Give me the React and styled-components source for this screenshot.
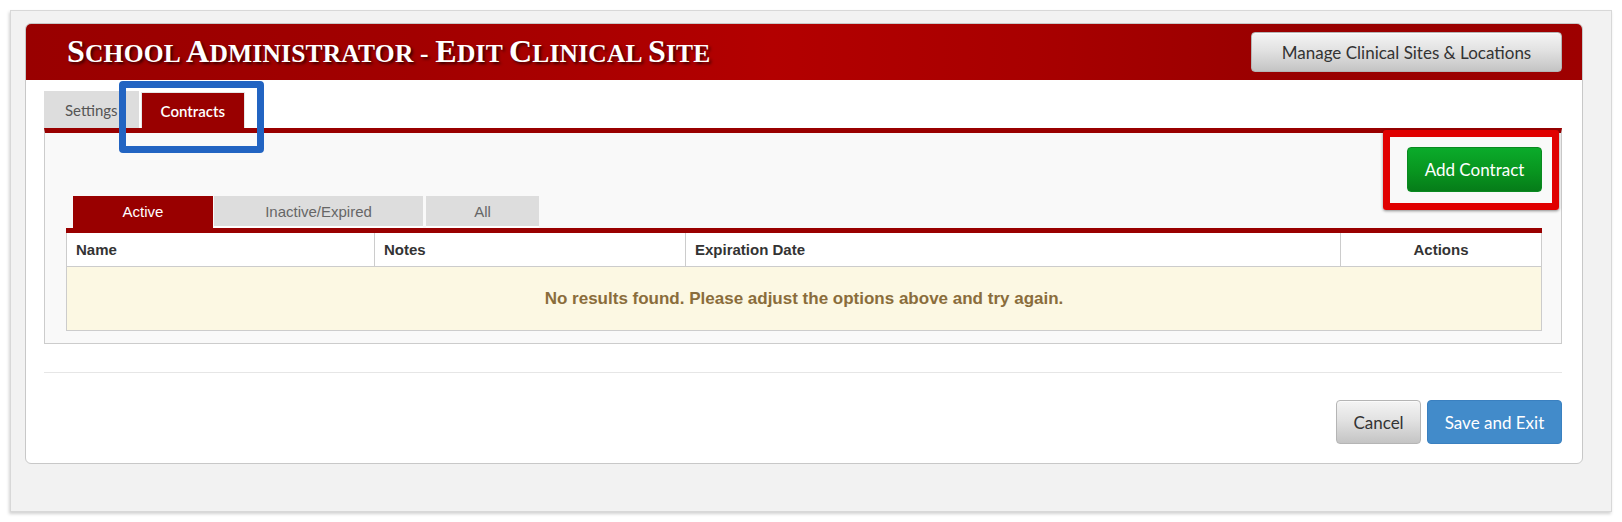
import React from "react";
import styled, { createGlobalStyle } from "styled-components";

const GlobalStyle = createGlobalStyle`
  body {
    margin: 0;
    background: #ffffff;
    font-family: "Liberation Sans", Arial, sans-serif;
  }
`;

const SOURCE = `"Lato", "Open Sans", sans-serif`;

export default function App() {
  return (
    <>
      <GlobalStyle />
      <Frame>
        <Card>
          <Header>
            <Title>
              <Word text="School" /> <Word text="Administrator" /> - <Word text="Edit" />{" "}
              <Word text="Clinical" /> <Word text="Site" />
            </Title>
            <GreyButton $width={311} $height={40}>Manage Clinical Sites &amp; Locations</GreyButton>
          </Header>
          <Body>
            <TabRow>
              <PageTab>Settings</PageTab>
              <PageTab $active>Contracts</PageTab>
              <BlueMark />
            </TabRow>
            <Panel>
              <RedMark />
              <Toolbar>
                <GreenButton>Add Contract</GreenButton>
              </Toolbar>
              <SubTabs>
                <SubTab $active $width={140}>Active</SubTab>
                <SubTab $width={209}>Inactive/Expired</SubTab>
                <SubTab $width={113} $gap={3}>All</SubTab>
              </SubTabs>
              <Table>
                <colgroup>
                  <Col $width={308} />
                  <Col $width={311} />
                  <Col $width={655} />
                  <Col />
                </colgroup>
                <thead>
                  <tr>
                    <Th>Name</Th>
                    <Th>Notes</Th>
                    <Th>Expiration Date</Th>
                    <Th $center>Actions</Th>
                  </tr>
                </thead>
                <tbody>
                  <tr>
                    <EmptyCell colSpan={4}>No results found. Please adjust the options above and try again.</EmptyCell>
                  </tr>
                </tbody>
              </Table>
            </Panel>
            <Divider />
            <Footer>
              <GreyButton $width={85} $height={44}>Cancel</GreyButton>
              <BlueButton>Save and Exit</BlueButton>
            </Footer>
          </Body>
        </Card>
      </Frame>
    </>
  );
}

function Word({ text }) {
  return (
    <span>
      <Cap>{text[0].toUpperCase()}</Cap>
      {text.slice(1).toUpperCase()}
    </span>
  );
}

const Frame = styled.div`
  margin: 10px;
  background: #f2f2f2;
  border: 1px solid #d8d8d8;
  box-shadow: -1px 2px 3px rgba(0, 0, 0, 0.18);
  padding: 12px 28px 47px 14px;
`;

const Card = styled.div`
  background: #fff;
  border: 1px solid #c8c8c8;
  border-radius: 6px;
  overflow: hidden;
`;

const Header = styled.div`
  height: 56px;
  display: flex;
  align-items: center;
  justify-content: space-between;
  padding: 0 20px 0 41px;
  background: linear-gradient(
    to right,
    #990000 0%,
    #a20000 25%,
    #b30000 48%,
    #a80000 65%,
    #980000 82%,
    #9e0000 100%
  );
`;

const Title = styled.h1`
  margin: -2px 0 0;
  font-family: "Liberation Serif", "Times New Roman", serif;
  font-weight: bold;
  font-size: 25.5px;
  color: #fff;
  letter-spacing: 0.2px;
  text-shadow: 2px 2px 3px rgba(0, 0, 0, 0.65);
  white-space: nowrap;
`;

const Cap = styled.span`
  font-size: 32px;
`;

const GreyButton = styled.button`
  width: ${(p) => p.$width}px;
  height: ${(p) => p.$height}px;
  padding: 0;
  border: 1px solid #b5b5b5;
  border-radius: 4px;
  background: linear-gradient(to bottom, #f4f4f4 0%, #e2e2e2 45%, #c4c4c4 100%);
  color: #333;
  font-family: ${SOURCE};
  font-size: 17px;
  box-shadow: inset 0 1px 0 rgba(255, 255, 255, 0.6);
`;

const Body = styled.div`
  padding: 11px 20px 19px 18px;
`;

const TabRow = styled.div`
  position: relative;
  display: flex;
  align-items: flex-end;
  gap: 2px;
  height: 37px;
`;

const PageTab = styled.div`
  height: ${(p) => (p.$active ? 36 : 37)}px;
  box-sizing: border-box;
  display: flex;
  align-items: center;
  padding: 0 ${(p) => (p.$active ? 19 : 21)}px;
  background: ${(p) => (p.$active ? "#990000" : "#dddddd")};
  border: ${(p) => (p.$active ? "1px solid #e6e6e6" : "none")};
  border-bottom: none;
  color: ${(p) => (p.$active ? "#fff" : "#555")};
  font-family: ${SOURCE};
  font-size: 15px;
  font-weight: ${(p) => (p.$active ? 600 : 400)};
`;

const BlueMark = styled.div`
  position: absolute;
  left: 75px;
  top: -10px;
  width: 145px;
  height: 72px;
  box-sizing: border-box;
  border: 7px solid #2264c2;
  border-radius: 4px;
  z-index: 2;
`;

const Panel = styled.div`
  position: relative;
  background: #f9f9f9;
  border: 1px solid #cccccc;
  border-top: 5px solid #990000;
  padding: 14px 19px 12px 21px;
`;

const RedMark = styled.div`
  position: absolute;
  right: 2px;
  top: -3px;
  width: 176px;
  height: 80px;
  box-sizing: border-box;
  border: 7px solid #e00000;
  border-radius: 3px;
  box-shadow: 0 1px 3px rgba(0, 0, 0, 0.45);
`;

const Toolbar = styled.div`
  display: flex;
  justify-content: flex-end;
`;

const GreenButton = styled.button`
  position: relative;
  width: 135px;
  height: 45px;
  padding: 0;
  border: 1px solid #0a8a20;
  border-radius: 4px;
  background: linear-gradient(to bottom, #0bab2b 0%, #08951f 55%, #067c19 100%);
  color: #fff;
  font-family: ${SOURCE};
  font-size: 17px;
`;

const SubTabs = styled.div`
  display: flex;
  margin-top: 4px;
  padding-left: 7px;
`;

const SubTab = styled.div`
  width: ${(p) => p.$width}px;
  height: 32px;
  box-sizing: border-box;
  margin-left: ${(p) => (p.$active ? 0 : p.$gap || 1)}px;
  display: flex;
  align-items: center;
  justify-content: center;
  background: ${(p) => (p.$active ? "#990000" : "#dddddd")};
  border-bottom: 2px solid ${(p) => (p.$active ? "#990000" : "#ffffff")};
  color: ${(p) => (p.$active ? "#fff" : "#666")};
  font-size: 15px;
`;

const Table = styled.table`
  width: 100%;
  table-layout: fixed;
  border-collapse: collapse;
  border: 1px solid #cccccc;
  border-top: 5px solid #990000;
  background: #fff;
`;

const Col = styled.col`
  width: ${(p) => (p.$width ? `${p.$width}px` : "auto")};
`;

const Th = styled.th`
  height: 33px;
  padding: 0 9px;
  border: 1px solid #cccccc;
  border-top: none;
  text-align: ${(p) => (p.$center ? "center" : "left")};
  font-size: 15px;
  font-weight: bold;
  color: #333;
`;

const EmptyCell = styled.td`
  height: 63px;
  padding: 0;
  background: #fcf8e3;
  color: #8a6d3b;
  font-size: 17px;
  font-weight: bold;
  text-align: center;
`;

const Divider = styled.div`
  margin-top: 28px;
  height: 1px;
  background: #e6e6e6;
`;

const Footer = styled.div`
  display: flex;
  justify-content: flex-end;
  gap: 6px;
  margin-top: 27px;
`;

const BlueButton = styled.button`
  width: 135px;
  height: 44px;
  padding: 0;
  border: 1px solid #3a80c0;
  border-radius: 4px;
  background: #428bca;
  color: #fff;
  font-family: ${SOURCE};
  font-size: 17px;
`;
